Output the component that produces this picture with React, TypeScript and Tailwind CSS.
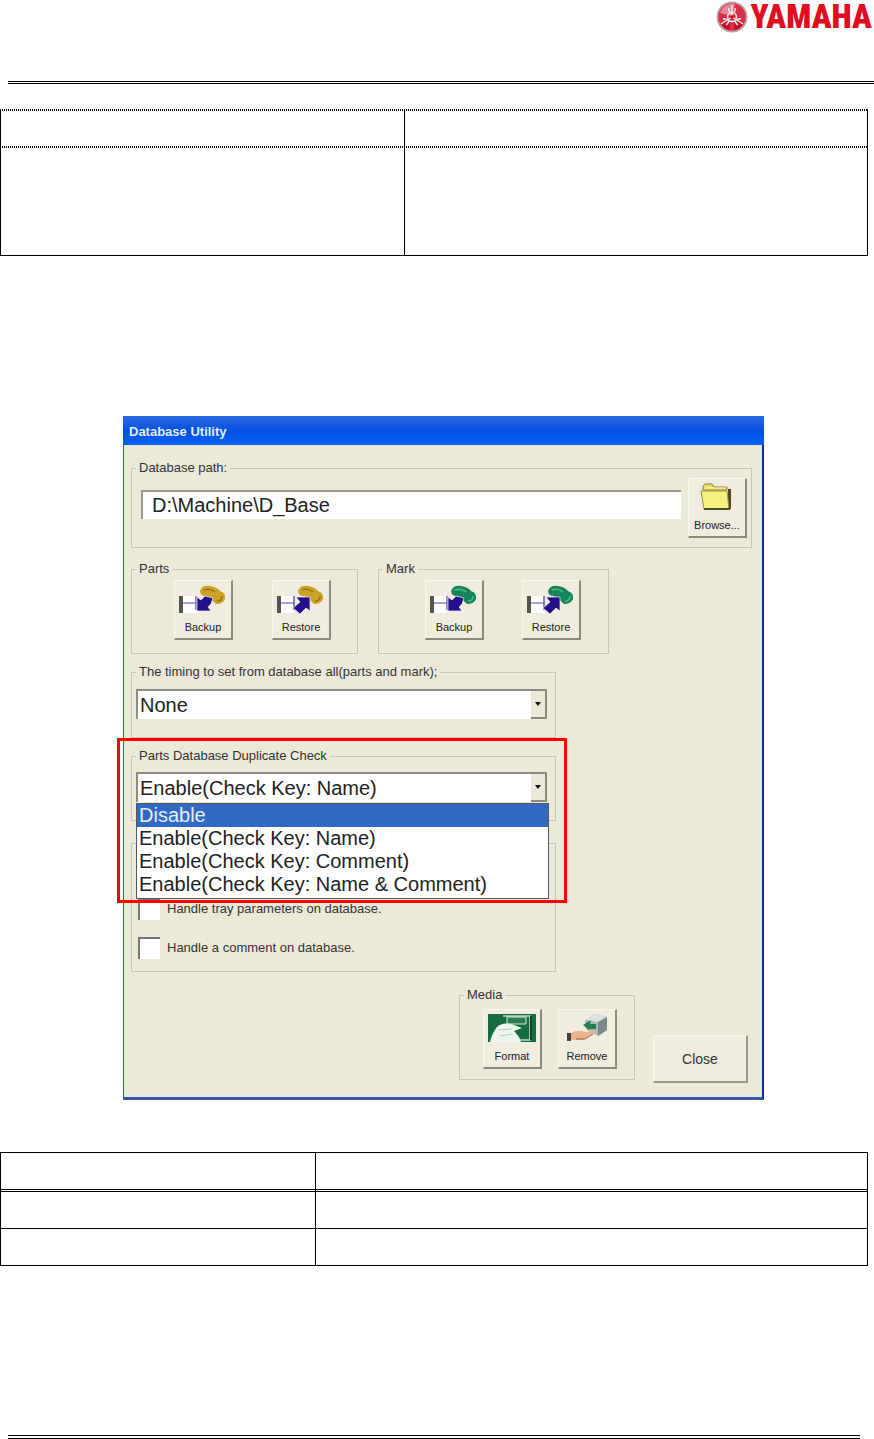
import { type FC, type ReactNode, useId, useState } from "react";

const TIMING_OPTIONS = ["None"];

const DUPLICATE_OPTIONS = [
  "Disable",
  "Enable(Check Key: Name)",
  "Enable(Check Key: Comment)",
  "Enable(Check Key: Name & Comment)",
];

const YamahaLogo: FC = () => (
  <div className="flex h-[33px] items-center gap-[3px]">
    <svg viewBox="0 0 32 32" className="size-8" aria-hidden="true">
      <circle cx="16" cy="16" r="15.5" fill="#b9a3a3" />
      <circle cx="16" cy="16" r="13.8" fill="#d9304a" />
      <path d="M4 12A13 13 0 0 1 19 3L16 15Z" fill="#e58a9c" />
      <path d="M5 22L13 18L14 29Q8 28 5 22Z" fill="#c20f24" />
      <path d="M27 22L19 18L18 29Q24 28 27 22Z" fill="#c20f24" />
      <g stroke="#fbe9ec" strokeWidth="1.4" fill="none">
        <path d="M16 16V4M16 16L5 23M16 16L27 23" />
        <path d="M13 7Q12 10 15 12M19 7Q20 10 17 12" />
        <path d="M7 18Q10 17 11 20M10 24Q13 22 13 19" />
        <path d="M25 18Q22 17 21 20M22 24Q19 22 19 19" />
        <circle cx="16" cy="16" r="4.5" />
      </g>
      <circle cx="16" cy="16" r="1.8" fill="#c20f24" />
    </svg>
    <span className="font-['Roboto_Condensed','Open_Sans_Condensed','Liberation_Sans',sans-serif] text-[33px] leading-[38px] font-black text-[#e00d20]">
      YAMAHA
    </span>
  </div>
);

const FolderIcon: FC = () => (
  <svg viewBox="1 0 56 40" className="h-10 w-full" aria-hidden="true">
    <path d="M15 11V7L17 5H24L26 8H39V11Z" fill="#e6dc62" stroke="#8b8436" />
    <path d="M40 10H43V30H40Z" fill="#4d4920" />
    <path d="M13 12H39L41 30H16Z" fill="#f6f07c" stroke="#99903a" />
    <path d="M16 30H42" stroke="#4d4920" strokeWidth="2" />
    <path d="M17 9H38" stroke="#fffbc0" />
  </svg>
);

interface TransferIconProps {
  color: string;
  shade: string;
  restore?: boolean;
}

const TransferIcon: FC<TransferIconProps> = ({ color, shade, restore }) => (
  <svg viewBox="1 0 56 40" className="h-10 w-full" aria-hidden="true">
    <path d="M9 15H22V32H9Z" fill="#ffffff" />
    <path d="M5 15H9V32H5Z" fill="#55554c" />
    <path d="M9 22H23" stroke="#8683c4" strokeWidth="1.5" />
    <path d="M22 15V29" stroke="#6460b4" strokeWidth="1.5" />
    <path
      d="M26 10Q28 4 36 5Q43 6 46 10Q52 12 51 18Q49 23 42 23Q37 18 32 15Q26 15 26 10Z"
      fill={color}
    />
    <path d="M30 9Q36 7 41 11M43 20Q48 20 48 15" stroke={shade} fill="none" strokeWidth="1.5" />
    {restore ? (
      <path d="M24 16H38V30L34 27L28 33L21 27L28 21Z" fill="#24108a" stroke="#f4f1ff" strokeWidth="0.7" />
    ) : (
      <path d="M23 30V16L27 19L31 15L39 17L37 23L34 26L37 30Z" fill="#24108a" stroke="#f4f1ff" strokeWidth="0.7" />
    )}
  </svg>
);

const FormatIcon: FC = () => (
  <svg viewBox="1 1 56 40" className="h-10 w-full" aria-hidden="true">
    <path d="M5 5H53V33H5Z" fill="#176b40" />
    <path d="M20 7H47V31H24" fill="none" stroke="#b8dcc6" strokeWidth="1.5" />
    <path d="M24 8H43V15H24Z" fill="#2c7c50" stroke="#d6ebdd" />
    <path d="M7 33Q9 24 14 18Q20 12 31 16L39 19L31 22L36 28L38 33Z" fill="#eef5ee" />
    <path d="M15 21L29 20M17 27L30 25" stroke="#b4cdbd" />
    <path d="M48 7V31" stroke="#0b4728" strokeWidth="2" />
  </svg>
);

const RemoveIcon: FC = () => (
  <svg viewBox="1 1 56 40" className="h-10 w-full" aria-hidden="true">
    <path d="M27 11L36 5L49 8V21L40 27L28 20Z" fill="#aeb8b8" />
    <path d="M27 11L36 5L49 8L40 13Z" fill="#dce2e0" />
    <path d="M40 13L49 8V21L40 27Z" fill="#7b8889" />
    <path d="M25 16L33 11L32 15H38V20H31L32 22Z" fill="#238052" />
    <path d="M13 24Q20 20 27 23L36 22Q38 24 33 26L25 31H13Z" fill="#e9b48c" />
    <path d="M18 30L27 30L35 25" stroke="#a9663e" fill="none" />
    <path d="M9 24H13V32H9Z" fill="#4b3a38" />
  </svg>
);

interface IconButtonProps {
  label: string;
  children: ReactNode;
}

const IconButton: FC<IconButtonProps> = ({ label, children }) => (
  <button
    type="button"
    className="flex h-[60px] w-[59px] shrink-0 flex-col items-center border-t border-r-2 border-b-2 border-l border-t-[#f8f6ee] border-r-[#8d897c] border-b-[#8d897c] border-l-[#f8f6ee] bg-[#f0ecdf]"
  >
    {children}
    <span className="text-[11px] leading-3 text-[#222222]">{label}</span>
  </button>
);

interface GroupProps {
  title: string;
  htmlFor?: string;
  className: string;
  children: ReactNode;
}

const Group: FC<GroupProps> = ({ title, htmlFor, className, children }) => (
  <fieldset className="border border-[#c9c6b6]">
    <legend className="ml-1 px-[3px] text-[13px] leading-[18px]">
      {htmlFor ? <label htmlFor={htmlFor}>{title}</label> : title}
    </legend>
    <div className={className}>{children}</div>
  </fieldset>
);

interface ComboProps {
  id: string;
  value: string;
  options: string[];
  onChange: (value: string) => void;
}

const Combo: FC<ComboProps> = ({ id, value, options, onChange }) => (
  <div className="relative">
    <select
      id={id}
      value={value}
      onChange={(e) => onChange(e.target.value)}
      className="block h-[30px] w-full appearance-none border-t-2 border-l-2 border-[#8f8c84] bg-white pl-0.5 text-xl leading-7 text-[#222222]"
    >
      {options.map((option) => (
        <option key={option}>{option}</option>
      ))}
    </select>
    <span className="pointer-events-none absolute top-0.5 right-0 flex h-7 w-4 items-center justify-center border-r-2 border-b-2 border-[#8d897c] bg-[#ece9d8]">
      <svg viewBox="0 0 6 4" className="h-1 w-1.5" aria-hidden="true">
        <path d="M0 0H6L3 4Z" fill="#111111" />
      </svg>
    </span>
  </div>
);

interface CheckRowProps {
  label: string;
}

const CheckRow: FC<CheckRowProps> = ({ label }) => {
  const id = useId();
  return (
    <div className="flex items-center gap-[7px]">
      <input
        id={id}
        type="checkbox"
        className="size-[22px] appearance-none border-t-2 border-l-2 border-[#77747c] bg-white checked:bg-[#316ac5]"
      />
      <label htmlFor={id} className="text-[13px] leading-[18px]">
        {label}
      </label>
    </div>
  );
};

const DatabaseUtility: FC = () => {
  const pathId = useId();
  const timingId = useId();
  const duplicateId = useId();
  const [path, setPath] = useState("D:\\Machine\\D_Base");
  const [timing, setTiming] = useState("None");
  const [duplicate, setDuplicate] = useState("Enable(Check Key: Name)");
  const [active, setActive] = useState("Disable");

  return (
    <section className="mt-40 ml-[123px] max-w-[641px] font-['Liberation_Sans',Arial,sans-serif] text-[#333333]">
      <h1 className="h-[29px] bg-linear-to-b from-[#2a6be0] via-[#0350e0] to-[#0262f8] px-1.5 text-[13px] leading-8 font-bold text-[#e4eeff]">
        Database Utility
      </h1>

      <div className="border-r-2 border-b-3 border-l border-r-[#0b2c9c] border-b-[#3d57a8] border-l-[#2a60d4]">
        <div className="border-x-2 border-b-2 border-[#dfeae4] bg-[#ece9d8] pt-3.5 pr-2 pb-3 pl-[5px]">
          <Group
            title="Database path:"
            htmlFor={pathId}
            className="flex items-start gap-[7px] pt-px pr-1 pb-[9px] pl-[9px]"
          >
            <input
              id={pathId}
              value={path}
              onChange={(e) => setPath(e.target.value)}
              className="mt-3 h-[29px] min-w-0 flex-1 border-t-2 border-l-2 border-[#9a978c] bg-white pl-[9px] text-xl text-[#222222]"
            />
            <IconButton label="Browse...">
              <FolderIcon />
            </IconButton>
          </Group>

          <div className="mt-3 flex gap-5">
            <Group title="Parts" className="flex gap-[39px] pt-0.5 pr-[26px] pb-[13px] pl-[42px]">
              <IconButton label="Backup">
                <TransferIcon color="#c9a227" shade="#99770f" />
              </IconButton>
              <IconButton label="Restore">
                <TransferIcon color="#c9a227" shade="#99770f" restore />
              </IconButton>
            </Group>
            <Group title="Mark" className="flex gap-[38px] pt-0.5 pr-[27px] pb-[13px] pl-[46px]">
              <IconButton label="Backup">
                <TransferIcon color="#15855a" shade="#52b888" />
              </IconButton>
              <IconButton label="Restore">
                <TransferIcon color="#15855a" shade="#52b888" restore />
              </IconButton>
            </Group>
          </div>

          <div className="mt-[9px] max-w-[425px]">
            <Group
              title="The timing to set from database all(parts and mark);"
              htmlFor={timingId}
              className="pt-2 pr-2 pb-[18px] pl-1"
            >
              <Combo id={timingId} value={timing} options={TIMING_OPTIONS} onChange={setTiming} />
            </Group>
          </div>

          <div className="relative z-10 mt-[9px] max-w-[425px]">
            <Group
              title="Parts Database Duplicate Check"
              htmlFor={duplicateId}
              className="pt-[7px] pr-2 pb-[18px] pl-1"
            >
              <Combo
                id={duplicateId}
                value={duplicate}
                options={DUPLICATE_OPTIONS}
                onChange={setDuplicate}
              />
            </Group>
            {/* Open option list */}
            <ul
              role="listbox"
              aria-label="Parts Database Duplicate Check"
              className="absolute top-14 right-[7px] left-[5px] border border-[#55555c] bg-white pb-0.5 text-xl leading-[23px] text-[#222222]"
            >
              {DUPLICATE_OPTIONS.map((option) => (
                <li
                  key={option}
                  role="option"
                  aria-selected={option === active}
                  onMouseEnter={() => setActive(option)}
                  onClick={() => setDuplicate(option)}
                  className="px-0.5 aria-selected:bg-[#316ac5] aria-selected:text-[#e4eeff]"
                >
                  {option}
                </li>
              ))}
            </ul>
            {/* Callout frame */}
            <div className="pointer-events-none absolute -top-[9px] -right-[11px] -left-3.5 h-[165px] border-3 border-[#ff0000]" />
          </div>

          <fieldset className="mt-[22px] flex max-w-[425px] flex-col gap-[17px] border border-[#c9c6b6] pt-[54px] pb-3 pl-1.5">
            <CheckRow label="Handle tray parameters on database." />
            <CheckRow label="Handle a comment on database." />
          </fieldset>

          <div className="mt-3.5 flex items-end justify-end gap-[18px] pr-1">
            <div className="mb-[3px]">
              <Group title="Media" className="flex gap-4 pt-[5px] pr-[17px] pb-2.5 pl-[23px]">
                <IconButton label="Format">
                  <FormatIcon />
                </IconButton>
                <IconButton label="Remove">
                  <RemoveIcon />
                </IconButton>
              </Group>
            </div>
            <button
              type="button"
              className="h-12 w-[95px] border-t border-r-2 border-b-2 border-l border-t-[#f8f6ee] border-r-[#9d998b] border-b-[#9d998b] border-l-[#f8f6ee] bg-[#f0ecdf] text-sm"
            >
              Close
            </button>
          </div>
        </div>
      </div>
    </section>
  );
};

const App: FC = () => (
  <div className="bg-white">
    <header className="ml-2 border-b-3 border-double border-black pb-12">
      <div className="flex justify-end pr-0.5">
        <YamahaLogo />
      </div>
    </header>

    <main className="mr-1.5">
      <table className="mt-[25px] w-full table-fixed border-separate border-spacing-0">
        <tbody>
          <tr className="h-[37px] bg-[repeating-linear-gradient(90deg,#000_0_1px,#fff_1px_2px)] bg-[length:100%_2px] bg-no-repeat">
            <td className="w-[404px] border-l border-black" />
            <td className="border-x border-black" />
          </tr>
          <tr className="h-[110px] bg-[repeating-linear-gradient(90deg,#000_0_1px,#fff_1px_2px)] bg-[length:100%_2px] bg-no-repeat">
            <td className="border-b border-l border-black" />
            <td className="border-x border-b border-black" />
          </tr>
        </tbody>
      </table>

      <DatabaseUtility />

      <table className="mt-13 w-full table-fixed border-separate border-spacing-0">
        <tbody>
          <tr className="h-10">
            <td className="w-[315px] border-t border-b-3 border-l border-black [border-bottom-style:double]" />
            <td className="border-x border-t border-b-3 border-black [border-bottom-style:double]" />
          </tr>
          <tr className="h-[37px]">
            <td className="border-b border-l border-black" />
            <td className="border-x border-b border-black" />
          </tr>
          <tr className="h-[37px]">
            <td className="border-b border-l border-black" />
            <td className="border-x border-b border-black" />
          </tr>
        </tbody>
      </table>
    </main>

    <footer className="mt-[169px] mr-3.5 ml-2 border-t-4 border-double border-black" />
  </div>
);

export default App;
